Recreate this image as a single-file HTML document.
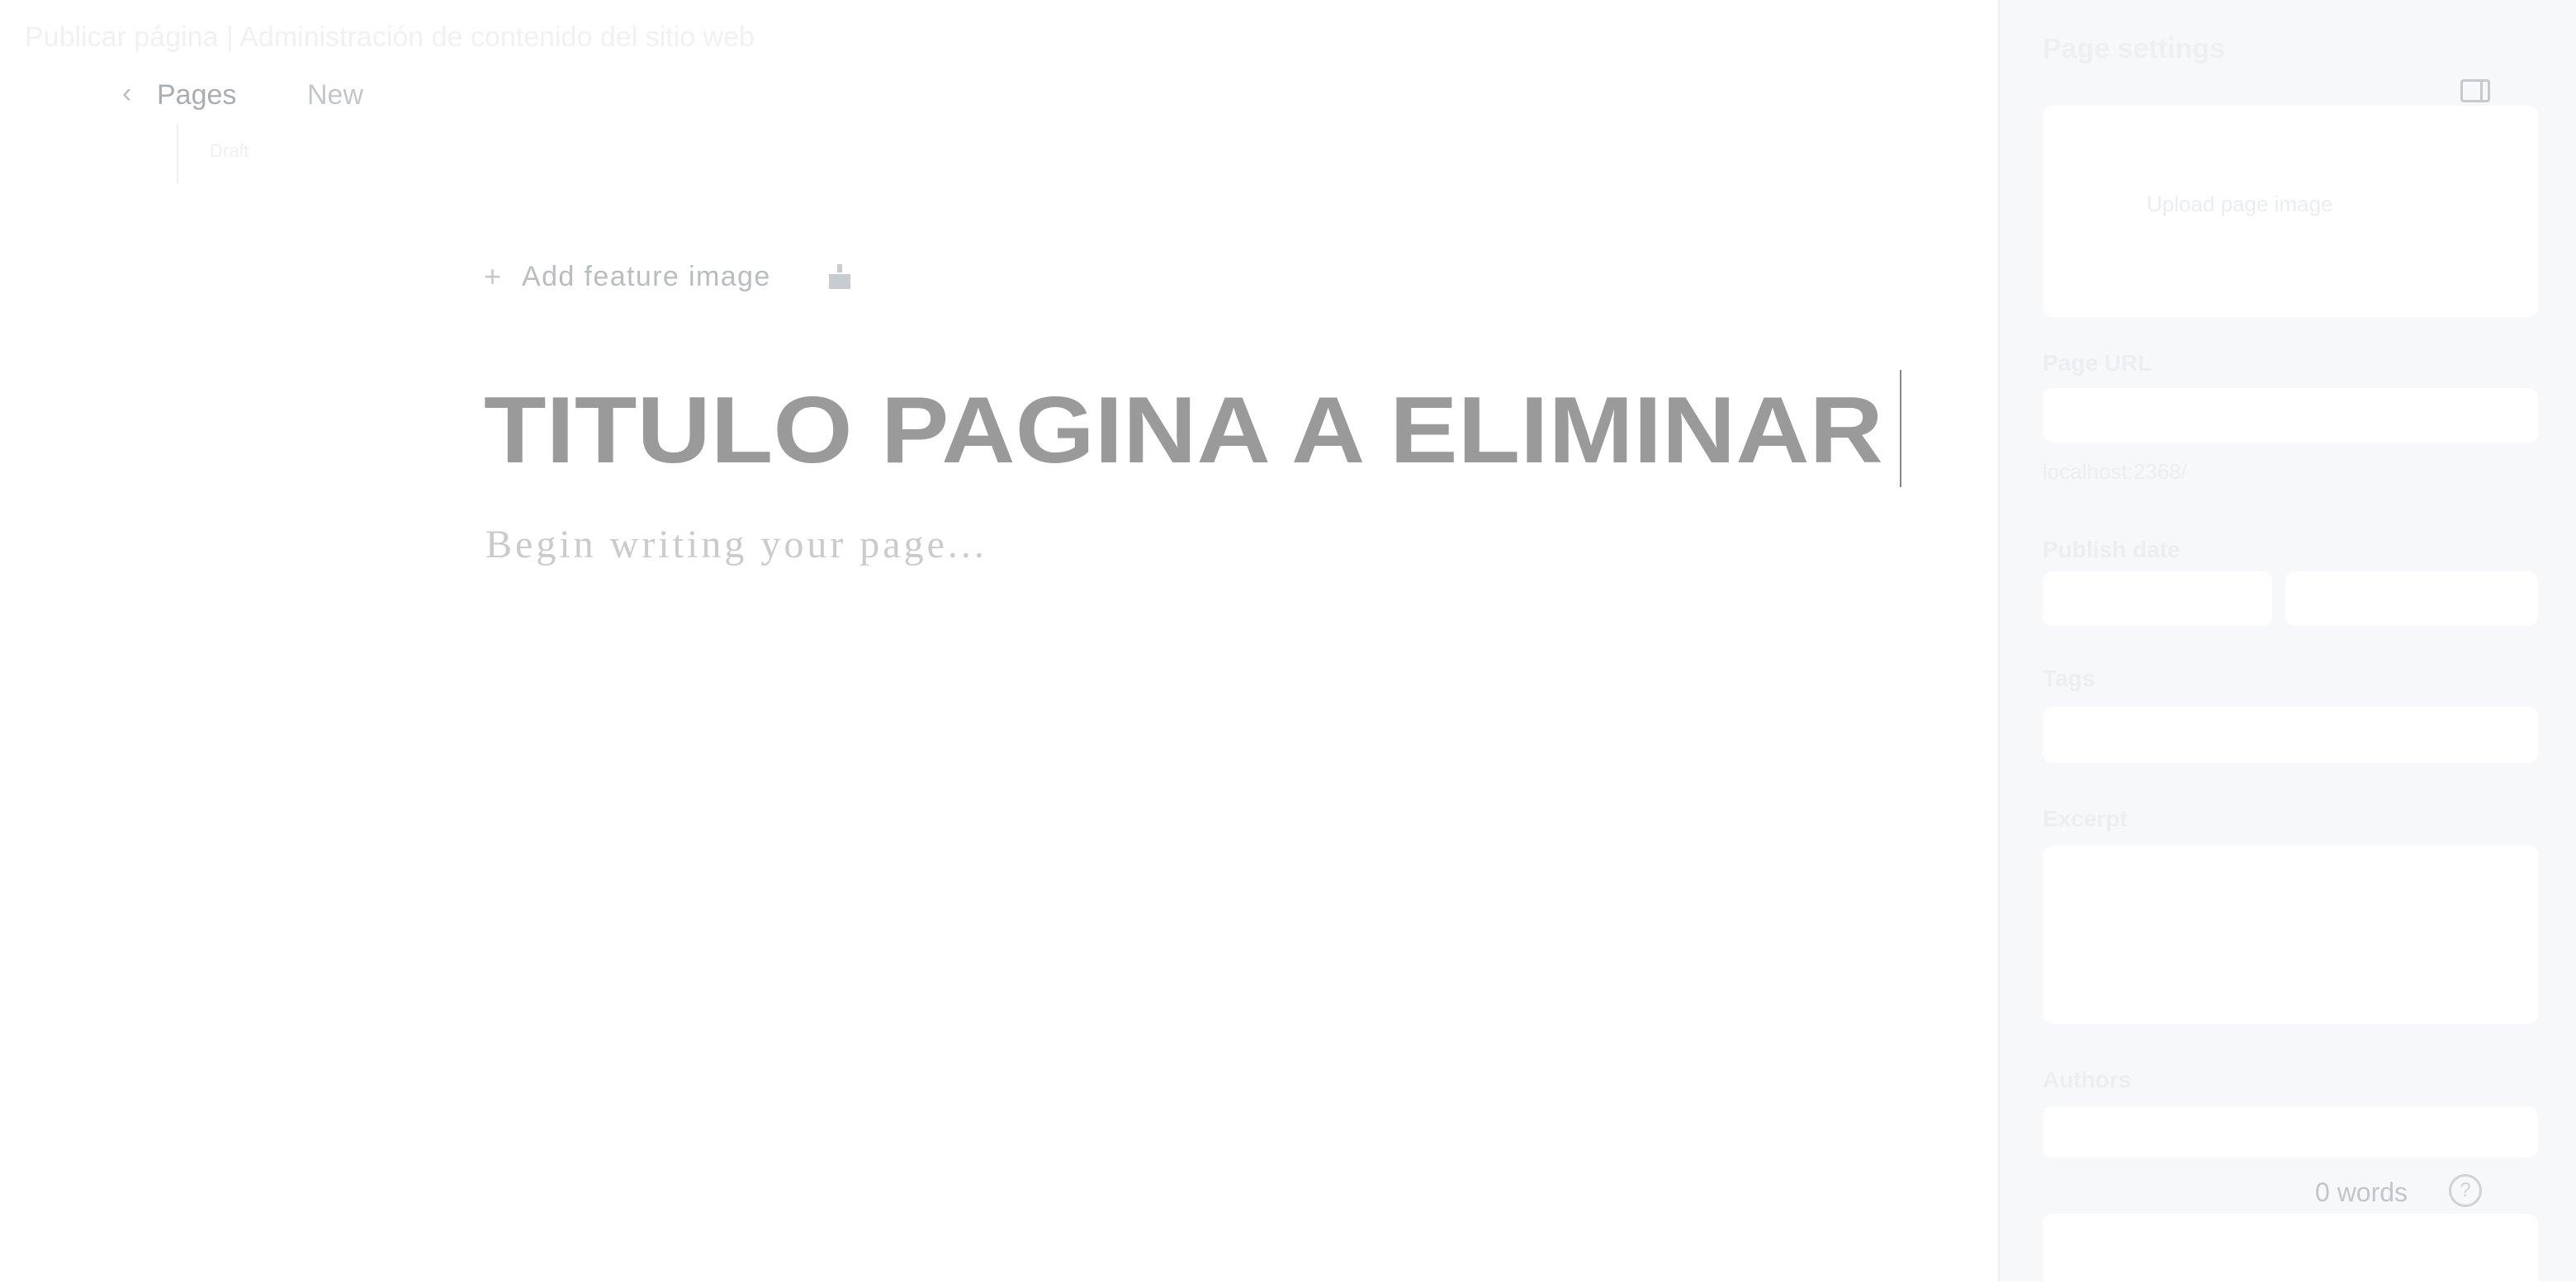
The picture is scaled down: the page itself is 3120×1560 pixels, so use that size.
<!DOCTYPE html>
<html><head><meta charset="utf-8"><style>
html,body{margin:0;padding:0;}
body{width:3120px;height:1552px;position:relative;overflow:hidden;background:#fff;font-family:"Liberation Sans",sans-serif;}
.a{position:absolute;white-space:nowrap;}
.side{position:absolute;left:2420px;top:0;width:700px;height:1552px;background:#f6f8fa;border-left:2px solid #eef1f4;}
.box{position:absolute;background:#fff;border-radius:12px;left:2474px;width:600px;}
.lbl{position:absolute;left:2474px;color:#eceff2;font-size:28px;font-weight:bold;}
</style></head><body>
<div class="a" style="left:30px;top:26px;font-size:34px;color:#f1f1f1;">Publicar página | Administración de contenido del sitio web</div>
<div class="a" style="left:148px;top:94px;font-size:34px;color:#b9bcc2;">‹</div>
<div class="a" style="left:190px;top:96px;font-size:34px;color:#a9adb4;">Pages</div>
<div class="a" style="left:372px;top:96px;font-size:34px;color:#c3c7cd;">New</div>
<div class="a" style="left:214px;top:150px;width:2px;height:72px;background:#eef1f4;"></div>
<div class="a" style="left:254px;top:170px;font-size:22px;color:#f0f0f0;">Draft</div>

<div class="a" style="left:586px;top:314px;font-size:36px;color:#c5c8cd;">+</div>
<div class="a" style="left:632px;top:316px;font-size:34px;color:#b9bcc2;letter-spacing:1.4px;">Add feature image</div>
<div class="a" style="left:1000px;top:318px;width:34px;height:34px;">
<svg width="34" height="34" viewBox="0 0 34 34"><rect x="4" y="14" width="26" height="18" fill="#c8cbd0"/><rect x="14" y="2" width="6" height="10" fill="#c8cbd0"/></svg></div>

<div class="a" style="left:586px;top:456px;font-size:114px;font-weight:bold;color:#9a9a9a;transform:scaleX(1.085);transform-origin:0 0;">TITULO PAGINA A ELIMINAR</div>
<div class="a" style="left:2301px;top:448px;width:2px;height:142px;background:#888;"></div>
<div class="a" style="left:588px;top:632px;font-family:'Liberation Serif',serif;font-size:48px;color:#cbcbcb;letter-spacing:4px;">Begin writing your page...</div>

<div class="side"></div>
<div class="a" style="left:2474px;top:40px;font-size:34px;font-weight:bold;color:#eef0f3;">Page settings</div>
<div class="a" style="left:2980px;top:96px;width:36px;height:28px;border:3px solid #c6c9ce;border-radius:4px;box-sizing:border-box;"><div style="position:absolute;right:6px;top:0;width:3px;height:22px;background:#c6c9ce;"></div></div>
<div class="box" style="top:128px;height:256px;"></div>
<div class="a" style="left:2600px;top:232px;font-size:26px;color:#ebedf0;">Upload page image</div>
<div class="lbl" style="top:424px;">Page URL</div>
<div class="box" style="top:470px;height:66px;"></div>
<div class="a" style="left:2474px;top:556px;font-size:26px;color:#eceff2;">localhost:2368/</div>
<div class="lbl" style="top:650px;">Publish date</div>
<div class="box" style="top:692px;height:66px;width:278px;"></div>
<div class="box" style="top:692px;height:66px;left:2768px;width:306px;"></div>
<div class="lbl" style="top:806px;">Tags</div>
<div class="box" style="top:856px;height:68px;"></div>
<div class="lbl" style="top:976px;">Excerpt</div>
<div class="box" style="top:1024px;height:216px;"></div>
<div class="lbl" style="top:1292px;">Authors</div>
<div class="box" style="top:1340px;height:62px;"></div>
<div class="a" style="left:2804px;top:1426px;font-size:32px;color:#c2c5ca;">0 words</div>
<div class="a" style="left:2966px;top:1422px;width:40px;height:40px;border:3px solid #cfd2d6;border-radius:50%;box-sizing:border-box;text-align:center;font-size:24px;line-height:34px;color:#cfd2d6;">?</div>
<div class="box" style="top:1470px;height:90px;"></div>
</body></html>
